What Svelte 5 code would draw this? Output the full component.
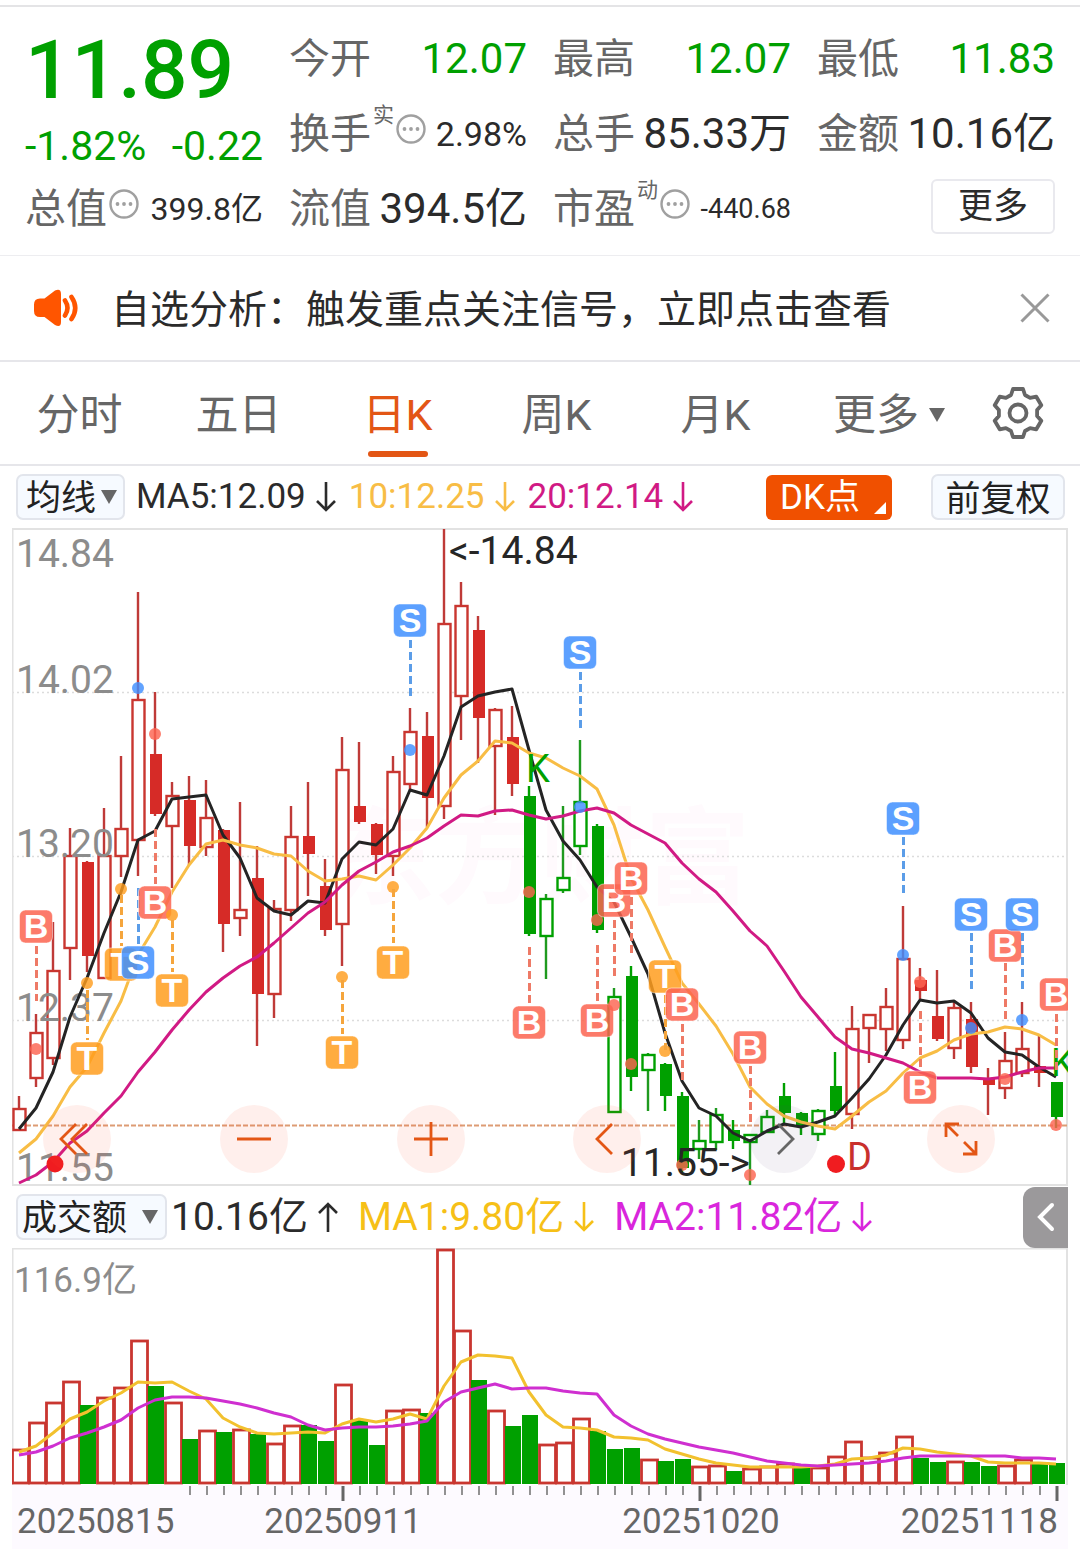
<script>
  const X0 = 19;
  const STEP = 17;
  const px = (i) => X0 + STEP * i;

  // kind: u = hollow red, d = solid red, h = hollow green, g = solid green
  // values: high, body top, body bottom, low
  const candles = [
    ['u', 1096, 1109, 1130, 1130], ['u', 1014, 1033, 1078, 1087], ['u', 922, 971, 1058, 1065],
    ['u', 828, 856, 948, 980], ['d', 861, 862, 956, 972], ['u', 808, 856, 978, 978],
    ['u', 756, 829, 856, 877], ['u', 592, 700, 840, 876], ['d', 692, 754, 814, 816],
    ['u', 782, 796, 826, 888], ['d', 776, 800, 846, 865], ['u', 780, 818, 847, 856],
    ['d', 829, 830, 924, 952], ['u', 802, 910, 918, 936], ['d', 846, 878, 994, 1046],
    ['u', 900, 909, 994, 1018], ['u', 806, 837, 910, 921], ['d', 782, 836, 854, 896],
    ['d', 859, 886, 930, 936], ['u', 737, 770, 924, 966], ['d', 742, 806, 822, 824],
    ['d', 823, 824, 855, 874], ['u', 756, 772, 856, 876], ['u', 708, 732, 784, 790],
    ['d', 712, 736, 798, 827], ['u', 529, 624, 806, 819], ['u', 582, 606, 696, 740],
    ['d', 616, 630, 718, 763], ['u', 708, 710, 746, 815], ['d', 706, 737, 784, 796],
    ['g', 786, 796, 934, 936], ['h', 894, 899, 936, 979], ['h', 806, 878, 890, 893],
    ['h', 740, 802, 846, 855], ['g', 824, 826, 930, 933], ['h', 988, 997, 1112, 1112],
    ['g', 966, 976, 1077, 1091], ['h', 1053, 1055, 1070, 1111], ['g', 1063, 1064, 1096, 1111],
    ['g', 1092, 1096, 1168, 1172], ['h', 1120, 1141, 1149, 1159], ['h', 1108, 1115, 1142, 1150],
    ['g', 1120, 1130, 1141, 1149], ['h', 1134, 1135, 1142, 1185], ['h', 1110, 1117, 1132, 1132],
    ['g', 1083, 1096, 1113, 1124], ['g', 1112, 1113, 1126, 1135], ['h', 1109, 1111, 1134, 1141],
    ['g', 1052, 1086, 1111, 1115], ['u', 1006, 1029, 1114, 1129], ['u', 1015, 1015, 1028, 1063],
    ['u', 988, 1007, 1029, 1051], ['u', 906, 959, 1040, 1049], ['d', 968, 980, 991, 999],
    ['d', 970, 1016, 1039, 1041], ['u', 1001, 1008, 1048, 1059], ['d', 1002, 1019, 1067, 1073],
    ['d', 1068, 1079, 1085, 1115], ['u', 1032, 1061, 1088, 1099], ['u', 1002, 1049, 1073, 1077],
    ['d', 1036, 1066, 1073, 1087], ['g', 1082, 1082, 1117, 1128]
  ];

  const ma5 = [1129, 1108, 1072, 1017, 978, 933, 892, 840, 831, 799, 797, 795, 835, 858, 898, 911, 915, 901, 903, 859, 842, 845, 829, 790, 795, 756, 707, 696, 692, 689, 750, 810, 841, 860, 887, 902, 937, 974, 1033, 1081, 1108, 1116, 1133, 1141, 1131, 1124, 1127, 1122, 1116, 1098, 1079, 1055, 1025, 1000, 1003, 1001, 1013, 1038, 1052, 1055, 1067, 1077];
  const ma10 = [1153, 1139, 1116, 1087, 1067, 1033, 1001, 955, 927, 892, 865, 844, 840, 845, 848, 854, 856, 871, 881, 879, 876, 880, 865, 848, 828, 798, 775, 761, 741, 743, 753, 758, 768, 776, 789, 825, 878, 910, 947, 983, 1004, 1026, 1054, 1087, 1104, 1116, 1122, 1126, 1129, 1116, 1102, 1091, 1073, 1058, 1051, 1040, 1034, 1032, 1027, 1029, 1035, 1045];
  const ma20 = [1183, 1175, 1162, 1143, 1131, 1113, 1096, 1072, 1052, 1030, 1010, 992, 978, 966, 957, 943, 928, 913, 902, 885, 871, 862, 852, 846, 838, 826, 815, 816, 811, 810, 815, 819, 816, 811, 808, 813, 825, 834, 843, 863, 879, 892, 911, 931, 946, 971, 997, 1017, 1037, 1049, 1053, 1058, 1063, 1072, 1078, 1078, 1078, 1079, 1077, 1072, 1068, 1068];

  // letter, candle index, badge y, dash start, dash end, dot y
  const signals = [
    ['B', 1, 926, 946, 1001, 1049], ['T', 4, 1058, 990, 1040, 983], ['T', 6, 964, 895, 946, 889],
    ['S', 7, 962, 888, 944, 688], ['B', 8, 902, 829, 884, 734], ['T', 9, 990, 920, 972, 915],
    ['T', 19, 1052, 980, 1034, 977], ['T', 22, 962, 889, 943, 887], ['S', 23, 620, 640, 696, 750],
    ['B', 30, 1022, 947, 1003, 892], ['S', 33, 652, 672, 728, 807], ['B', 34, 1020, 945, 1001, 920],
    ['B', 35, 900, 920, 976, 1005], ['B', 36, 878, 897, 954, 1064], ['T', 38, 976, 995, 1050, 1051],
    ['B', 39, 1004, 1024, 1080, 1165], ['B', 43, 1047, 1066, 1122, 1175], ['S', 52, 818, 837, 893, 955],
    ['B', 53, 1087, 1011, 1067, 982], ['S', 56, 914, 933, 990, 1028], ['B', 58, 945, 963, 1020, 1079],
    ['S', 59, 914, 933, 990, 1020], ['B', 61, 994, 1014, 1070, 1125]
  ];

  const volumes = [
    ['u', 1449], ['u', 1422], ['u', 1402], ['u', 1381], ['g', 1405], ['u', 1397], ['u', 1387], ['u', 1340],
    ['g', 1386], ['u', 1402], ['g', 1439], ['u', 1430], ['g', 1432], ['u', 1429], ['g', 1434], ['u', 1443],
    ['u', 1425], ['g', 1425], ['g', 1441], ['u', 1384], ['g', 1419], ['g', 1445], ['u', 1410], ['u', 1409],
    ['g', 1413], ['u', 1249], ['u', 1330], ['g', 1380], ['u', 1410], ['g', 1426], ['g', 1415], ['u', 1444],
    ['u', 1442], ['u', 1418], ['g', 1431], ['g', 1449], ['g', 1448], ['u', 1459], ['g', 1461], ['g', 1459],
    ['u', 1466], ['u', 1465], ['g', 1471], ['u', 1468], ['u', 1466], ['u', 1463], ['g', 1468], ['u', 1467],
    ['u', 1456], ['u', 1441], ['u', 1457], ['u', 1452], ['u', 1436], ['g', 1458], ['g', 1462], ['u', 1461],
    ['g', 1462], ['g', 1466], ['u', 1465], ['u', 1459], ['g', 1464], ['g', 1463]
  ];
  const vma1 = [1452, 1446, 1433, 1419, 1412, 1401, 1393, 1382, 1383, 1382, 1391, 1399, 1418, 1427, 1433, 1434, 1433, 1432, 1433, 1424, 1419, 1422, 1419, 1414, 1419, 1386, 1362, 1355, 1356, 1358, 1392, 1415, 1427, 1428, 1430, 1437, 1438, 1440, 1449, 1454, 1459, 1463, 1465, 1467, 1467, 1467, 1467, 1466, 1464, 1459, 1458, 1455, 1448, 1449, 1452, 1454, 1456, 1462, 1463, 1463, 1463, 1464];
  const vma2 = [1455, 1452, 1446, 1438, 1433, 1427, 1420, 1408, 1400, 1397, 1397, 1398, 1401, 1404, 1408, 1413, 1417, 1425, 1430, 1428, 1427, 1427, 1426, 1424, 1421, 1402, 1392, 1388, 1384, 1389, 1388, 1388, 1391, 1393, 1394, 1415, 1426, 1434, 1439, 1443, 1447, 1450, 1453, 1457, 1461, 1463, 1465, 1466, 1465, 1464, 1463, 1461, 1458, 1456, 1456, 1456, 1456, 1456, 1456, 1458, 1458, 1459];

  const line = (ys) => ys.map((y, i) => `${px(i)},${y}`).join(' ');
  const ticks = Array.from({ length: 52 }, (_, k) => k + 10);
  const major = [19, 40, 61];
  const priceLabels = [['14.84', 567], ['14.02', 693], ['13.20', 857], ['12.37', 1021], ['11.55', 1181]];

  const gear = Array.from({ length: 6 }, (_, k) => {
    const a = (k * Math.PI) / 3;
    return [[-7, -18], [-5, -24], [5, -24], [7, -18]]
      .map(([x, y]) => `${(x * Math.cos(a) - y * Math.sin(a)).toFixed(1)},${(x * Math.sin(a) + y * Math.cos(a)).toFixed(1)}`)
      .join(' ');
  }).join(' ');

  const tabs = ['分时', '五日', '日K', '周K', '月K'];
  let active = $state('日K');
  let noticeOpen = $state(true);
</script>

{#snippet info()}
  <svg class="info" viewBox="0 0 30 30" aria-hidden="true">
    <circle cx="15" cy="15" r="13.5" fill="none" stroke="#a0a0a0" stroke-width="2.4" />
    <circle cx="8.5" cy="15" r="1.9" fill="#a0a0a0" /><circle cx="15" cy="15" r="1.9" fill="#a0a0a0" /><circle cx="21.5" cy="15" r="1.9" fill="#a0a0a0" />
  </svg>
{/snippet}

{#snippet arrow(up)}
  <svg class="arrow" class:up viewBox="0 0 20 30" aria-hidden="true">
    <path d="M10 0V28M1 19L10 28L19 19" fill="none" stroke="currentColor" stroke-width="2.6" />
  </svg>
{/snippet}

<main>
  <header class="quote">
    <div class="headline">
      <div class="price">11.89</div>
      <div class="change"><span>-1.82%</span><span>-0.22</span></div>
    </div>
    <div class="cell"><span class="name">今开</span><span class="val green">12.07</span></div>
    <div class="cell"><span class="name">最高</span><span class="val green">12.07</span></div>
    <div class="cell"><span class="name">最低</span><span class="val green">11.83</span></div>
    <div class="cell"><span class="name">换手</span><span class="mark">实</span>{@render info()}<span class="val v34">2.98%</span></div>
    <div class="cell"><span class="name">总手</span><span class="val">85.33万</span></div>
    <div class="cell"><span class="name">金额</span><span class="val">10.16亿</span></div>
    <div class="cell"><span class="name">总值</span>{@render info()}<span class="val v32">399.8亿</span></div>
    <div class="cell"><span class="name">流值</span><span class="val">394.5亿</span></div>
    <div class="cell"><span class="name">市盈</span><span class="mark">动</span>{@render info()}<span class="val v27">-440.68</span></div>
    <div class="cell end"><button class="more">更多</button></div>
  </header>

  {#if noticeOpen}
    <section class="notice">
      <svg class="horn" viewBox="0 0 44 38" aria-hidden="true">
        <path d="M6 9.500H10.500L21 1.500Q27 -1 27 5V33Q27 39 21 36L10.500 28H6Q0 28 0 22V15.500Q0 9.500 6 9.500Z" fill="#ff5500" />
        <path d="M31 11.500Q36 19 31 26.500M37.500 8Q45 19 37.500 30" fill="none" stroke="#ff5500" stroke-width="4.600" stroke-linecap="round" />
      </svg>
      <a href="#signals">自选分析：触发重点关注信号，立即点击查看</a>
      <button class="close" aria-label="关闭" onclick={() => (noticeOpen = false)}>
        <svg viewBox="0 0 30 30"><path d="M1.500 1.500L28.500 28.500M28.500 1.500L1.500 28.500" stroke="#999" stroke-width="3" /></svg>
      </button>
    </section>
  {/if}

  <nav class="tabs">
    {#each tabs as t}
      <button class:on={active === t} onclick={() => (active = t)}>{t}</button>
    {/each}
    <button class="drop">更多<svg class="caret" viewBox="0 0 16 14" aria-hidden="true"><path d="M0 0H16L8 14Z" fill="#666" /></svg></button>
    <button class="set" aria-label="设置">
      <svg viewBox="-27 -27 54 54"><polygon points={gear} fill="none" stroke="#666" stroke-width="3.800" stroke-linejoin="round" /><circle r="8.500" fill="none" stroke="#666" stroke-width="3.800" /></svg>
    </button>
  </nav>

  <div class="bar">
    <label class="pick ma"><select aria-label="主图指标"><option>均线</option></select><svg class="caret" viewBox="0 0 16 14" aria-hidden="true"><path d="M0 0H16L8 14Z" fill="#666" /></svg></label>
    <div class="legend">
      <span>MA5:12.09{@render arrow(false)}</span>
      <span class="c10">10:12.25{@render arrow(false)}</span>
      <span class="c20">20:12.14{@render arrow(false)}</span>
    </div>
    <button class="dk">DK点<svg viewBox="0 0 12 12" aria-hidden="true"><path d="M12 0V12H0Z" fill="#fff" /></svg></button>
    <button class="pick adj">前复权</button>
  </div>

  <section class="chart">
    <svg viewBox="12 528 1056 658" role="img" aria-label="日K线图">
      <text x="330" y="895" font-size="105" font-weight="700" fill="#fffafd">东方财富</text>
      <g stroke="#dcdcdc" stroke-width="1.500" stroke-dasharray="2 3">
        <path d="M12 692.500H1068M12 856.500H1068M12 1020.500H1068" />
      </g>
      <path d="M12 529H1067M12 1185H1067" stroke="#e2e2e2" stroke-width="2" />
      <path d="M12.500 528V1186M1067 528V1186" stroke="#e2e2e2" stroke-width="2" />
      <path d="M12 1125.500H1068" stroke="#dd9c74" stroke-width="2" stroke-dasharray="5 2" />

      {#each candles as [k, hi, top, bot, lo], i}
        {@const c = k === 'u' ? '#c93630' : k === 'd' ? '#d62b27' : '#00a000'}
        {@const w = k === 'h' ? '#1f9a1f' : k === 'g' ? '#00a000' : '#bf3a38'}
        <path d={`M${px(i)} ${hi}V${top}M${px(i)} ${bot}V${lo}`} stroke={w} stroke-width="2.400" />
        {#if k === 'u' || k === 'h'}
          <rect x={px(i) - 5.5} y={top} width="12" height={bot - top} fill="#fff" stroke={c} stroke-width="2.400" />
        {:else}
          <rect x={px(i) - 5} y={top} width="12" height={bot - top} fill={c} />
        {/if}
      {/each}

      {#each priceLabels as [t, y]}
        <text x="16" {y} font-size="39" fill="#8c8c8c">{t}</text>
      {/each}

      <g fill="none" stroke-width="3" stroke-linejoin="round">
        <polyline points={line(ma5)} stroke="#242424" />
        <polyline points={line(ma10)} stroke="#f8bd45" />
        <polyline points={line(ma20)} stroke="#d11a84" />
      </g>

      <text x="526" y="782" font-size="38" fill="#00a000">K</text>
      <text x="1051" y="1076" font-size="38" fill="#00a000">K</text>

      {#each signals as [t, i, by, d1, d2, dy]}
        <g class={`sig ${t}`}>
          <circle cx={px(i)} cy={dy} r="6" class="dot" />
          <path d={`M${px(i) + 0.5} ${d1}V${d2}`} stroke-width="3" stroke-dasharray="8 4" />
          <rect x={px(i) - 16.5} y={by - 16} width="33" height="33" rx="6" />
          <text x={px(i)} y={by + 12} text-anchor="middle">{t}</text>
        </g>
      {/each}

      <circle cx="55" cy="1164" r="8.500" fill="#f01c20" />
      <circle cx="836" cy="1164" r="9" fill="#f01c20" />
      <text x="847" y="1170" font-size="38" fill="#c9302c">D</text>
      <text x="449" y="564" font-size="39" fill="#262626">&lt;-14.84</text>
      <text x="750" y="1176" font-size="39" fill="#262626" text-anchor="end">11.55-&gt;</text>
    </svg>

    <div class="tools">
      <button aria-label="最早"><svg viewBox="-25 -25 50 50"><path d="M-1 -15L-16 0L-1 15M10 -15L-5 0L10 15" /></svg></button>
      <button aria-label="缩小"><svg viewBox="-25 -25 50 50"><path d="M-17 0H17" /></svg></button>
      <button aria-label="放大"><svg viewBox="-25 -25 50 50"><path d="M-17 0H17M0 -17V17" /></svg></button>
      <button aria-label="左移"><svg viewBox="-25 -25 50 50"><path d="M5 -15L-10 0L5 15" /></svg></button>
      <button aria-label="右移" class="dim"><svg viewBox="-25 -25 50 50"><path d="M-6 -15L9 0L-6 15" /></svg></button>
      <button aria-label="全屏"><svg viewBox="-25 -25 50 50"><path d="M-3 -3L-15 -15M-15 -2V-15H-2M3 3L15 15M15 2V15H2" /></svg></button>
    </div>
  </section>

  <div class="bar vol">
    <label class="pick amt"><select aria-label="副图指标"><option>成交额</option></select><svg class="caret" viewBox="0 0 16 14" aria-hidden="true"><path d="M0 0H16L8 14Z" fill="#666" /></svg></label>
    <div class="legend wide">
      <span>10.16亿{@render arrow(true)}</span>
      <span class="v1">MA1:9.80亿{@render arrow(false)}</span>
      <span class="v2">MA2:11.82亿{@render arrow(false)}</span>
    </div>
    <button class="side" aria-label="展开"><svg viewBox="0 0 20 30"><path d="M16 3L4 15L16 27" fill="none" stroke="#fff" stroke-width="4" stroke-linecap="round" /></svg></button>
  </div>

  <section class="volume">
    <svg viewBox="12 1248 1056 301" role="img" aria-label="成交额柱状图">
      <rect x="12" y="1485" width="1056" height="64" fill="#fdfaff" />
      <path d="M12 1248.500H1068" stroke="#e2e2e2" stroke-width="2" />
      <path d="M12.500 1248V1485M1067 1248V1485" stroke="#e2e2e2" stroke-width="2" />
      <text x="14" y="1292" font-size="35" fill="#8c8c8c">116.9亿</text>
      {#each volumes as [k, top], i}
        {#if k === 'u'}
          <rect x={px(i) - 6.5} y={top + 1} width="16" height={1482 - top} fill="#fff" stroke="#c93630" stroke-width="2.800" />
        {:else}
          <rect x={px(i) - 7} y={top} width="16" height={1484 - top} fill="#00a000" />
        {/if}
      {/each}
      <g fill="none" stroke-width="3" stroke-linejoin="round">
        <polyline points={line(vma1)} stroke="#f2c12e" />
        <polyline points={line(vma2)} stroke="#cf2fd0" />
      </g>
      {#each ticks as i}
        {@const m = major.includes(i)}
        <path d={`M${px(i) + 1} 1486V${m ? 1501 : 1495}`} stroke={m ? '#666' : '#777'} stroke-width={m ? 3 : 1.6} />
      {/each}
      <g font-size="35" fill="#666">
        <text x="17" y="1533">20250815</text>
        <text x="343" y="1533" text-anchor="middle">20250911</text>
        <text x="701" y="1533" text-anchor="middle">20251020</text>
        <text x="1058" y="1533" text-anchor="end">20251118</text>
      </g>
    </svg>
  </section>
</main>

<style>
  :global(body) { background: #fff; }
  main { font-family: Roboto, "Noto Sans CJK SC", sans-serif; color: #2b2b2b; padding-top: 5px; }
  button, select { font: inherit; color: inherit; background: none; border: 0; padding: 0; margin: 0; cursor: pointer; }
  svg { display: block; flex: none; }

  .quote { border-top: 2px solid #e4e4e6; border-bottom: 1px solid #ededf0; padding: 14px 25px 9px; display: grid; grid-template-columns: repeat(4, 1fr); grid-auto-rows: 75px; column-gap: 26px; }
  .headline { grid-row: span 2; color: #00a000; }
  .price { font-size: 82px; font-weight: 500; line-height: 98px; }
  .change { display: flex; justify-content: space-between; font-size: 41px; line-height: 54px; }
  .cell { display: flex; align-items: center; gap: 2px; white-space: nowrap; line-height: 60px; }
  .name { font-size: 41px; color: #666; }
  .val { font-size: 42px; margin-left: auto; }
  .green { color: #00a000; }
  .v34 { font-size: 34px; }
  .v32 { font-size: 32px; }
  .v27 { font-size: 27px; }
  .mark { font-size: 21px; line-height: 24px; color: #666; padding-bottom: 38px; }
  .info { width: 30px; height: 30px; margin-bottom: 10px; }
  .end { justify-content: flex-end; }
  .more { width: 124px; height: 55px; border: 2px solid #e9e9ee; border-radius: 6px; font-size: 35px; line-height: 48px; margin-bottom: 4px; }

  .notice { display: flex; align-items: center; height: 104px; padding: 0 30px 0 34px; border-bottom: 2px solid #e6e6ea; }
  .horn { width: 44px; height: 38px; }
  .notice a { flex: 1; margin-left: 33px; padding-top: 4px; font-size: 39px; line-height: 56px; color: inherit; text-decoration: none; white-space: nowrap; }
  .close svg { width: 30px; height: 30px; }

  .tabs { display: grid; grid-template-columns: repeat(5, 159fr) 188fr 97fr; height: 102px; border-bottom: 2px solid #e6e6ea; font-size: 43px; color: #666; }
  .tabs button { position: relative; display: flex; align-items: center; justify-content: center; white-space: nowrap; line-height: 60px; padding-top: 4px; }
  .tabs .on { color: #e35615; }
  .tabs .on::after { content: ""; position: absolute; left: 50%; bottom: 7px; width: 60px; height: 6px; margin-left: -30px; border-radius: 3px; background: #e35615; }
  .drop { gap: 10px; }
  .caret { width: 16px; height: 14px; }
  .tabs .set { justify-content: flex-start; padding: 0 0 0 8px; }
  .set svg { width: 54px; height: 54px; }

  .bar { display: flex; align-items: center; height: 62px; padding: 0 15px 0 16px; white-space: nowrap; }
  .pick { display: flex; align-items: center; box-sizing: border-box; height: 46px; border: 2px solid #e2e5ec; border-radius: 7px; background: #f6faff; font-size: 35px; color: #222; }
  .pick select { appearance: none; line-height: 42px; outline: none; padding-top: 3px; }
  .ma { width: 109px; padding-left: 8px; gap: 4px; }
  .amt { width: 151px; padding-left: 4px; gap: 14px; }
  .adj { width: 134px; justify-content: center; margin-left: 39px; padding-bottom: 4px; }
  .legend { display: flex; gap: 13px; margin-left: 11px; font-size: 35px; line-height: 48px; }
  .legend span { display: flex; align-items: center; gap: 10px; }
  .arrow { width: 20px; height: 30px; }
  .up { transform: rotate(180deg); }
  .c10 { color: #f8bd45; }
  .c20 { color: #d11a84; }
  .v1 { color: #f6c017; }
  .v2 { color: #d926dc; }
  .dk { position: relative; width: 126px; height: 45px; margin-left: auto; padding-right: 18px; border-radius: 6px; background: #f05000; color: #fff; font-size: 35px; line-height: 45px; }
  .dk svg { position: absolute; right: 6px; bottom: 6px; width: 12px; height: 12px; }

  .chart { position: relative; margin: 0 12px; }
  .chart > svg, .volume svg { width: 100%; height: auto; }
  .volume { margin: 0 12px; }
  .sig text { font-family: "Liberation Sans", sans-serif; font-size: 34px; font-weight: 700; fill: #fff; }
  .sig rect { stroke: #fff; stroke-opacity: 0.5; stroke-width: 1px; fill-opacity: 0.85; }
  .dot { fill-opacity: 0.82; }
  .B { fill: #fc6450; stroke: none; }
  .B path { stroke: #ee7a66; }
  .T { fill: #ff9d1e; }
  .T path { stroke: #f5a53c; }
  .S { fill: #3f8fff; }
  .S path { stroke: #5b9de8; }

  .tools { position: absolute; left: 31px; right: 73px; bottom: 13px; display: flex; justify-content: space-between; }
  .tools button { width: 68px; height: 68px; border-radius: 50%; background: rgba(250, 80, 40, 0.09); display: grid; place-items: center; }
  .tools .dim { background: rgba(90, 50, 110, 0.07); }
  .tools svg { width: 50px; height: 50px; }
  .tools path { fill: none; stroke: #e35615; stroke-width: 2.800; }
  .tools .dim path { stroke: #666; }

  .vol { padding: 0 12px 0 16px; }
  .wide { gap: 20px; margin-left: 4px; font-size: 39px; }
  .side { width: 45px; height: 61px; margin-left: auto; border-radius: 12px 0 0 12px; background: #9b999b; display: grid; place-items: center; }
  .side svg { width: 20px; height: 30px; }
</style>
